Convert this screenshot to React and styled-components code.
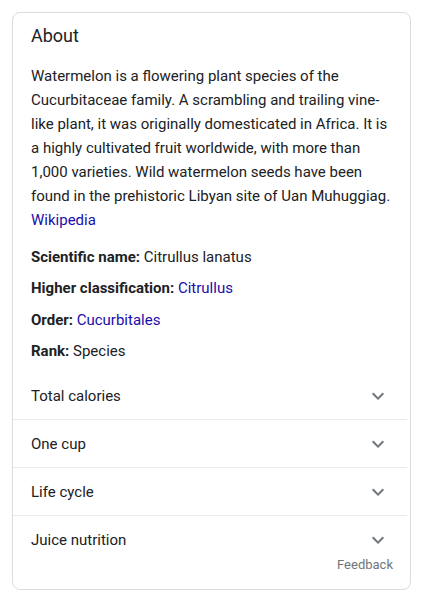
import React from "react";
import styled, { createGlobalStyle } from "styled-components";

const Global = createGlobalStyle`
  html, body { margin: 0; padding: 0; background: #fff; }
  body { font-family: Roboto, "Liberation Sans", Arial, sans-serif; color: #202124; }
`;

const Card = styled.section`
  box-sizing: border-box;
  width: 399px;
  margin: 12px 18px 0 12px;
  border: 1px solid #dadce0;
  border-radius: 8px;
  padding: 11px 0 16px 0;
  background: #fff;
`;

const Inner = styled.div`
  padding: 0 18px;
`;

const Title = styled.h2`
  margin: 0;
  font-size: 18px;
  line-height: 24px;
  font-weight: 400;
  color: #202124;
`;

const Description = styled.p`
  margin: 16px 0 0;
  font-size: 15px;
  line-height: 24px;
  color: #202124;
`;

const Link = styled.a`
  color: #1a0dab;
  text-decoration: none;
`;

const Facts = styled.div`
  margin-top: 12.5px;
  display: flex;
  flex-direction: column;
  gap: 7.5px;
`;

const Fact = styled.div`
  font-size: 15px;
  line-height: 24px;
  color: #202124;
`;

const Label = styled.span`
  font-weight: 700;
`;

const Rows = styled.div`
  margin: 9px 3px 0 0;
`;

const Row = styled.div`
  display: flex;
  align-items: center;
  justify-content: space-between;
  height: 47px;
  padding: 0 17px 0 18px;
  border-bottom: ${(p) => (p.$last ? "none" : "1px solid #ebebeb")};
  font-size: 15px;
  color: #202124;
`;

const Chevron = styled.svg`
  width: 24px;
  height: 24px;
  fill: #70757a;
  flex: none;
`;

const Footer = styled.div`
  margin-top: -6px;
  padding-right: 17px;
  text-align: right;
  font-size: 13px;
  line-height: 16px;
  color: #70757a;
`;

const ExpandIcon = () => (
  <Chevron viewBox="0 0 24 24" aria-hidden="true">
    <path d="M16.59 8.59L12 13.17 7.41 8.59 6 10l6 6 6-6z" />
  </Chevron>
);

const facts = [
  { label: "Scientific name:", value: "Citrullus lanatus" },
  { label: "Higher classification:", value: "Citrullus", link: true },
  { label: "Order:", value: "Cucurbitales", link: true },
  { label: "Rank:", value: "Species" },
];

const rows = ["Total calories", "One cup", "Life cycle", "Juice nutrition"];

export default function App() {
  return (
    <>
      <Global />
      <Card>
        <Inner>
          <Title>About</Title>
          <Description>
            Watermelon is a flowering plant species of the Cucurbitaceae family. A
            scrambling and trailing vine-like plant, it was originally domesticated
            in Africa. It is a highly cultivated fruit worldwide, with more than
            1,000 varieties. Wild watermelon seeds have been found in the
            prehistoric Libyan site of Uan Muhuggiag. <Link href="#">Wikipedia</Link>
          </Description>
          <Facts>
            {facts.map((f) => (
              <Fact key={f.label}>
                <Label>{f.label}</Label>{" "}
                {f.link ? <Link href="#">{f.value}</Link> : f.value}
              </Fact>
            ))}
          </Facts>
        </Inner>
        <Rows>
          {rows.map((r, i) => (
            <Row key={r} $last={i === rows.length - 1}>
              <span>{r}</span>
              <ExpandIcon />
            </Row>
          ))}
        </Rows>
        <Footer>Feedback</Footer>
      </Card>
    </>
  );
}
